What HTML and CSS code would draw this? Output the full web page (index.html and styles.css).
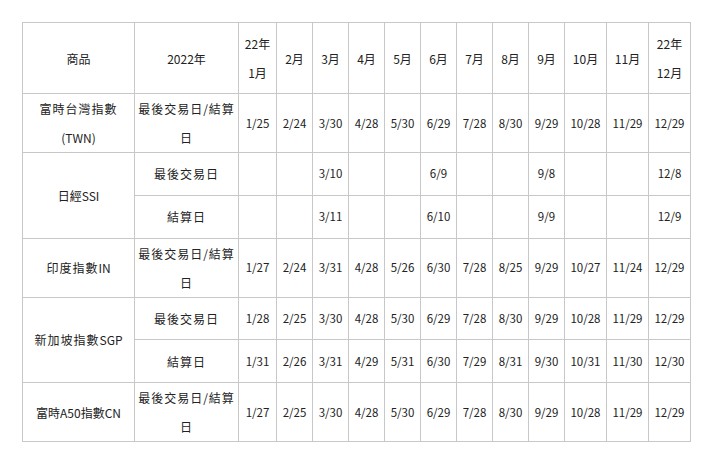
FILE: index.html
```html
<!DOCTYPE html>
<html lang="zh-Hant">
<head>
<meta charset="utf-8">
<title>2022 結算日</title>
<link rel="stylesheet" href="styles.css">
</head>
<body>
<table class="sched">
<colgroup>
<col class="c-name"><col class="c-type"><col class="c-m1">
<col class="c-m"><col class="c-m"><col class="c-m"><col class="c-m"><col class="c-m"><col class="c-m"><col class="c-m"><col class="c-m">
<col class="c-w"><col class="c-w"><col class="c-w">
</colgroup>
<tr class="r-head">
<td class="t">商品</td><td class="t">2022年</td><td class="t">22年<br>1月</td><td class="t">2月</td><td class="t">3月</td><td class="t">4月</td><td class="t">5月</td><td class="t">6月</td><td class="t">7月</td><td class="t">8月</td><td class="t">9月</td><td class="t">10月</td><td class="t">11月</td><td class="t">22年<br>12月</td>
</tr>
<tr class="r-tall">
<td class="t"><span class="sp">富時台灣指數</span><br>(TWN)</td><td class="t sp">最後交易日/結算<br>日</td><td>1/25</td><td>2/24</td><td>3/30</td><td>4/28</td><td>5/30</td><td>6/29</td><td>7/28</td><td>8/30</td><td>9/29</td><td>10/28</td><td>11/29</td><td>12/29</td>
</tr>
<tr class="r-short">
<td class="t" rowspan="2">日經SSI</td><td class="t sp">最後交易日</td><td></td><td></td><td>3/10</td><td></td><td></td><td>6/9</td><td></td><td></td><td>9/8</td><td></td><td></td><td>12/8</td>
</tr>
<tr class="r-short">
<td class="t sp">結算日</td><td></td><td></td><td>3/11</td><td></td><td></td><td>6/10</td><td></td><td></td><td>9/9</td><td></td><td></td><td>12/9</td>
</tr>
<tr class="r-tall">
<td class="t"><span class="sp">印度指數</span>IN</td><td class="t sp">最後交易日/結算<br>日</td><td>1/27</td><td>2/24</td><td>3/31</td><td>4/28</td><td>5/26</td><td>6/30</td><td>7/28</td><td>8/25</td><td>9/29</td><td>10/27</td><td>11/24</td><td>12/29</td>
</tr>
<tr class="r-short">
<td class="t" rowspan="2"><span class="sp">新加坡指數</span>SGP</td><td class="t sp">最後交易日</td><td>1/28</td><td>2/25</td><td>3/30</td><td>4/28</td><td>5/30</td><td>6/29</td><td>7/28</td><td>8/30</td><td>9/29</td><td>10/28</td><td>11/29</td><td>12/29</td>
</tr>
<tr class="r-short">
<td class="t sp">結算日</td><td>1/31</td><td>2/26</td><td>3/31</td><td>4/29</td><td>5/31</td><td>6/30</td><td>7/29</td><td>8/31</td><td>9/30</td><td>10/31</td><td>11/30</td><td>12/30</td>
</tr>
<tr class="r-tall">
<td class="t">富時A50指數CN</td><td class="t sp">最後交易日/結算<br>日</td><td>1/27</td><td>2/25</td><td>3/30</td><td>4/28</td><td>5/30</td><td>6/29</td><td>7/28</td><td>8/30</td><td>9/29</td><td>10/28</td><td>11/29</td><td>12/29</td>
</tr>
</table>
</body>
</html>
```
FILE: styles.css
```css
html, body {
  margin: 0;
  padding: 0;
  background: #ffffff;
}
body {
  padding: 22px 0 0 22px;
  font-family: "Noto Sans CJK TC", "Noto Sans", sans-serif;
  font-size: 11.5px;
  color: #222222;
}
.sched {
  border-collapse: collapse;
  table-layout: fixed;
  width: 668px;
}
.c-name { width: 112px; }
.c-type { width: 104px; }
.c-m1 { width: 38px; }
.c-m { width: 36px; }
.c-w { width: 42px; }
.sched td {
  border: 1px solid #c8c8c8;
  padding: 0;
  text-align: center;
  vertical-align: middle;
  line-height: 29px;
  white-space: nowrap;
  overflow: hidden;
}
.sched td.t {
  font-size: 12px;
}
.sp {
  letter-spacing: 1px;
}
.r-head { height: 71px; }
.r-tall { height: 57.5px; }
.r-short { height: 42.75px; }
```
